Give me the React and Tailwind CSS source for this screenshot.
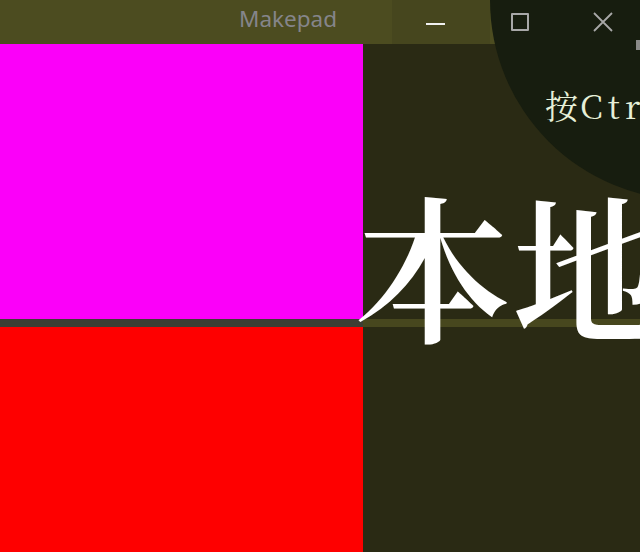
export default function App() {
  return (
    <div className="relative w-[640px] h-[552px] overflow-hidden bg-[#2a2a14] flex flex-col font-['Noto_Sans','Noto_Sans_CJK_SC',sans-serif]">
      {/* title bar */}
      <div className="h-11 flex items-center bg-[#4c4c20] shrink-0">
        <div className="w-[392px] flex pl-[239px]">
          <span className="text-[22.5px] text-[#85858a] leading-none -mt-[6px]">Makepad</span>
        </div>
        <div className="w-[98px] h-full bg-[#46461e] flex items-center justify-center">
          <div className="w-[19px] h-[2px] bg-[#f0f0f0] mt-[4px] -ml-[12px]" />
        </div>
        <div className="flex-1 h-full" />
      </div>

      <div className="flex flex-1">
        <div className="w-[363px] flex flex-col">
          <div className="h-[275px] bg-[#fb00f9]" />
          <div className="h-2 bg-[#3e3e34]" />
          <div className="flex-1 bg-[#fe0000]" />
        </div>
        <div className="flex-1 flex flex-col">
          <div className="h-[275px]" />
          <div className="h-2 bg-[#47471e]" />
          <div className="flex-1" />
        </div>
      </div>

      {/* dark circle overlay */}
      <div className="absolute left-[490px] top-[-200px] w-[400px] h-[400px] rounded-full bg-[#171d0f]" />

      {/* window buttons */}
      <div className="absolute top-0 left-[477px] h-11 flex">
        <div className="w-[85px] h-full flex items-center justify-center">
          <div className="w-[18px] h-[18px] border-2 border-[#a8a8a8] rounded-[1px]" />
        </div>
        <div className="w-[85px] h-full flex items-center justify-center">
          <svg width="22" height="22" viewBox="0 0 22 22" className="-ml-[4px]">
            <path d="M2 2 L20 20 M20 2 L2 20" stroke="#a8a8a8" strokeWidth="1.8" fill="none" />
          </svg>
        </div>
      </div>
      <div className="absolute top-[40px] right-0 w-[4px] h-[10px] bg-[#8a8a88]" />

      {/* prompt text */}
      <div className="absolute top-[88px] left-[545px] whitespace-nowrap text-[#e6efd8] text-[33px] leading-none font-['Noto_Serif_CJK_SC',serif]">
        按<span className="tracking-[5px] ml-[2px]">Ctrl</span>
      </div>

      {/* big text */}
      <div className="absolute top-[184px] left-[354px] whitespace-nowrap text-white text-[158px] font-semibold leading-none font-['Noto_Serif_CJK_SC','Noto_Sans_CJK_SC',serif]">
        本地
      </div>
    </div>
  );
}
